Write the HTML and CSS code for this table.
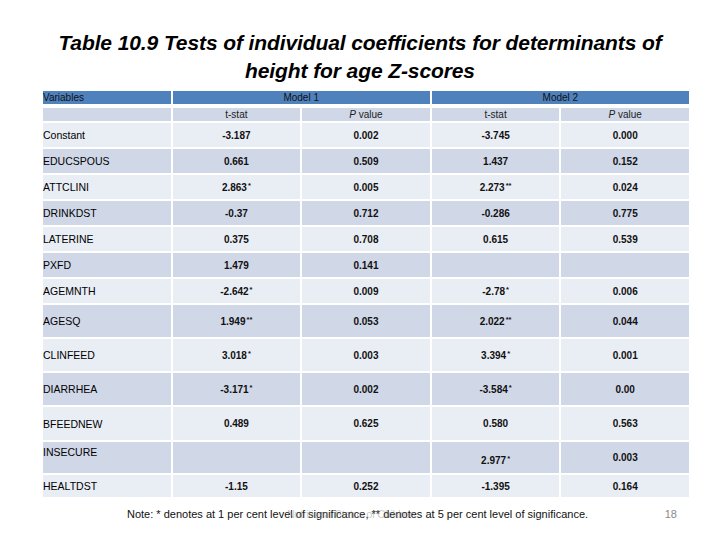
FILE: index.html
```html
<!DOCTYPE html>
<html>
<head>
<meta charset="utf-8">
<link rel="stylesheet" href="styles.css">
</head>
<body>
<div class="slide">
  <h1 class="title">Table 10.9 Tests of individual coefficients for determinants of<br>height for age Z-scores</h1>

  <div class="table">
    <div class="head">
      <div class="hcell left">Variables</div>
      <div class="hcell span2">Model 1</div>
      <div class="hcell span2">Model 2</div>
    </div>
    <div class="body">
      <div class="c dark"></div><div class="c dark sub">t-stat</div><div class="c dark sub"><span><i>P</i> value</span></div><div class="c dark sub">t-stat</div><div class="c dark sub"><span><i>P</i> value</span></div>

      <div class="c light lbl">Constant</div><div class="c light v">-3.187</div><div class="c light v">0.002</div><div class="c light v">-3.745</div><div class="c light v">0.000</div>
      <div class="c dark lbl">EDUCSPOUS</div><div class="c dark v">0.661</div><div class="c dark v">0.509</div><div class="c dark v">1.437</div><div class="c dark v">0.152</div>
      <div class="c light lbl">ATTCLINI</div><div class="c light v"><span>2.863<sup>*</sup></span></div><div class="c light v">0.005</div><div class="c light v"><span>2.273<sup>**</sup></span></div><div class="c light v">0.024</div>
      <div class="c dark lbl">DRINKDST</div><div class="c dark v">-0.37</div><div class="c dark v">0.712</div><div class="c dark v">-0.286</div><div class="c dark v">0.775</div>
      <div class="c light lbl">LATERINE</div><div class="c light v">0.375</div><div class="c light v">0.708</div><div class="c light v">0.615</div><div class="c light v">0.539</div>
      <div class="c dark lbl">PXFD</div><div class="c dark v">1.479</div><div class="c dark v">0.141</div><div class="c dark v"></div><div class="c dark v"></div>
      <div class="c light lbl">AGEMNTH</div><div class="c light v"><span>-2.642<sup>*</sup></span></div><div class="c light v">0.009</div><div class="c light v"><span>-2.78<sup>*</sup></span></div><div class="c light v">0.006</div>
      <div class="c dark lbl">AGESQ</div><div class="c dark v"><span>1.949<sup>**</sup></span></div><div class="c dark v">0.053</div><div class="c dark v"><span>2.022<sup>**</sup></span></div><div class="c dark v">0.044</div>
      <div class="c light lbl">CLINFEED</div><div class="c light v"><span>3.018<sup>*</sup></span></div><div class="c light v">0.003</div><div class="c light v"><span>3.394<sup>*</sup></span></div><div class="c light v">0.001</div>
      <div class="c dark lbl">DIARRHEA</div><div class="c dark v"><span>-3.171<sup>*</sup></span></div><div class="c dark v">0.002</div><div class="c dark v"><span>-3.584<sup>*</sup></span></div><div class="c dark v">0.00</div>
      <div class="c light lbl">BFEEDNEW</div><div class="c light v">0.489</div><div class="c light v">0.625</div><div class="c light v">0.580</div><div class="c light v">0.563</div>
      <div class="c dark lbl top">INSECURE</div><div class="c dark v"></div><div class="c dark v"></div><div class="c dark v low"><span>2.977<sup>*</sup></span></div><div class="c dark v">0.003</div>
      <div class="c light lbl">HEALTDST</div><div class="c light v">-1.15</div><div class="c light v">0.252</div><div class="c light v">-1.395</div><div class="c light v">0.164</div>
    </div>
  </div>

  <div class="footer">
    <p class="note">Note: * denotes at 1 per cent level of significance, ** denotes at 5 per cent level of significance.<span class="ghost">Nutritional Status of Children</span></p>
    <span class="page">18</span>
  </div>
</div>
</body>
</html>
```

FILE: styles.css
```css
* { box-sizing: border-box; }
html, body { margin: 0; padding: 0; background: #fff; }
.slide {
  width: 720px;
  height: 540px;
  position: relative;
  font-family: "Liberation Sans", Arial, sans-serif;
  color: #000;
  padding-top: 29px;
}
.title {
  margin: 0;
  text-align: center;
  font-size: 21px;
  font-weight: bold;
  font-style: italic;
  line-height: 28px;
  letter-spacing: -0.1px;
  color: #000;
}
.table {
  margin: 6px 0 0 43px;
  width: 646px;
  font-size: 10px;
}
.head {
  display: grid;
  grid-template-columns: repeat(5, 1fr);
  column-gap: 2px;
  height: 13px;
  margin-bottom: 4px;
}
.hcell {
  background: #4f81bd;
  color: #111;
  font-size: 10px;
  text-align: center;
  line-height: 13px;
}
.hcell.left { text-align: left; }
.hcell.span2 { grid-column: span 2; }
.body {
  display: grid;
  grid-template-columns: repeat(5, 1fr);
  grid-template-rows: 13px repeat(7, 24px) 32px 32px 32px 33px 31px 22px;
  gap: 2px;
}
.c {
  display: flex;
  align-items: center;
  justify-content: center;
  color: #111;
}
.light { background: #e9edf4; }
.dark { background: #d0d8e8; }
.sub { color: #222; font-size: 10px; }
.lbl { justify-content: flex-start; font-size: 10.5px; color: #000; }
.lbl.top { align-items: flex-start; padding-top: 4px; }
.v { font-weight: bold; }
.v.low { padding-top: 5px; }
sup { font-size: 7.5px; line-height: 0; vertical-align: 3px; margin-left: 1px; }
.footer {
  display: flex;
  align-items: baseline;
  margin-top: 11px;
  padding-left: 127px;
  padding-right: 43px;
}
.note {
  margin: 0;
  font-size: 11px;
  color: #111;
  position: relative;
}
.ghost {
  position: absolute;
  left: 160px;
  top: 0;
  color: rgba(120,120,120,0.4);
  letter-spacing: -0.4px;
}
.page {
  margin-left: auto;
  font-size: 11px;
  color: #8a8a8a;
}
```
